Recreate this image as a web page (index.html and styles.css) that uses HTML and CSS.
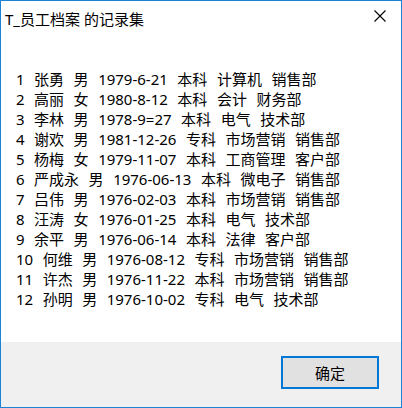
FILE: index.html
```html
<!DOCTYPE html>
<html lang="zh-CN">
<head>
<meta charset="utf-8">
<title>T_员工档案 的记录集</title>
<link rel="stylesheet" href="styles.css">
</head>
<body>
<div class="window">
  <div class="titlebar">
    <div class="title">T_员工档案 的记录集</div>
    <div class="close" aria-label="关闭">
      <svg width="12" height="12" viewBox="0 0 12 12"><path d="M0.5 0.5 L11.5 11.5 M11.5 0.5 L0.5 11.5" stroke="#000" stroke-width="1.1" fill="none"/></svg>
    </div>
  </div>
  <div class="content">
    <div class="row"><span>1</span><span>张勇</span><span>男</span><span>1979-6-21</span><span>本科</span><span>计算机</span><span>销售部</span></div>
    <div class="row"><span>2</span><span>高丽</span><span>女</span><span>1980-8-12</span><span>本科</span><span>会计</span><span>财务部</span></div>
    <div class="row"><span>3</span><span>李林</span><span>男</span><span>1978-9=27</span><span>本科</span><span>电气</span><span>技术部</span></div>
    <div class="row"><span>4</span><span>谢欢</span><span>男</span><span>1981-12-26</span><span>专科</span><span>市场营销</span><span>销售部</span></div>
    <div class="row"><span>5</span><span>杨梅</span><span>女</span><span>1979-11-07</span><span>本科</span><span>工商管理</span><span>客户部</span></div>
    <div class="row"><span>6</span><span>严成永</span><span>男</span><span>1976-06-13</span><span>本科</span><span>微电子</span><span>销售部</span></div>
    <div class="row"><span>7</span><span>吕伟</span><span>男</span><span>1976-02-03</span><span>本科</span><span>市场营销</span><span>销售部</span></div>
    <div class="row"><span>8</span><span>汪涛</span><span>女</span><span>1976-01-25</span><span>本科</span><span>电气</span><span>技术部</span></div>
    <div class="row"><span>9</span><span>余平</span><span>男</span><span>1976-06-14</span><span>本科</span><span>法律</span><span>客户部</span></div>
    <div class="row"><span>10</span><span>何维</span><span>男</span><span>1976-08-12</span><span>专科</span><span>市场营销</span><span>销售部</span></div>
    <div class="row"><span>11</span><span>许杰</span><span>男</span><span>1976-11-22</span><span>本科</span><span>市场营销</span><span>销售部</span></div>
    <div class="row"><span>12</span><span>孙明</span><span>男</span><span>1976-10-02</span><span>专科</span><span>电气</span><span>技术部</span></div>
  </div>
  <div class="footer">
    <button class="ok" type="button">确定</button>
  </div>
</div>
</body>
</html>
```

FILE: styles.css
```css
html, body {
  margin: 0;
  padding: 0;
  background: #ffffff;
}

.window {
  width: 402px;
  height: 408px;
  box-sizing: border-box;
  border: 1px solid #1883d7;
  background: #ffffff;
  display: flex;
  flex-direction: column;
  font-family: "Noto Sans", "Noto Sans CJK SC", sans-serif;
  font-size: 15px;
  color: #000000;
}

.titlebar {
  height: 36px;
  display: flex;
  align-items: center;
  padding-left: 4px;
}

.title {
  flex: 1;
  line-height: 20px;
  white-space: nowrap;
}

.close {
  width: 42px;
  height: 36px;
  display: flex;
  align-items: center;
  justify-content: center;
  margin-top: -6px;
}

.close svg {
  display: block;
}

.content {
  flex: 1;
  padding: 32px 0 0 15px;
}

.row {
  display: flex;
  gap: 9.5px;
  line-height: 20px;
  white-space: nowrap;
}

.footer {
  height: 65px;
  background: #f0f0f0;
  display: flex;
  justify-content: flex-end;
  align-items: flex-start;
  padding: 14px 22px 0 0;
  box-sizing: border-box;
}

.ok {
  width: 98px;
  height: 33px;
  box-sizing: border-box;
  border: 2px solid #0078d7;
  background: #e1e1e1;
  font-family: "Noto Sans", "Noto Sans CJK SC", sans-serif;
  font-size: 15px;
  color: #000000;
  padding: 0;
  margin: 0;
  line-height: 20px;
}
```
